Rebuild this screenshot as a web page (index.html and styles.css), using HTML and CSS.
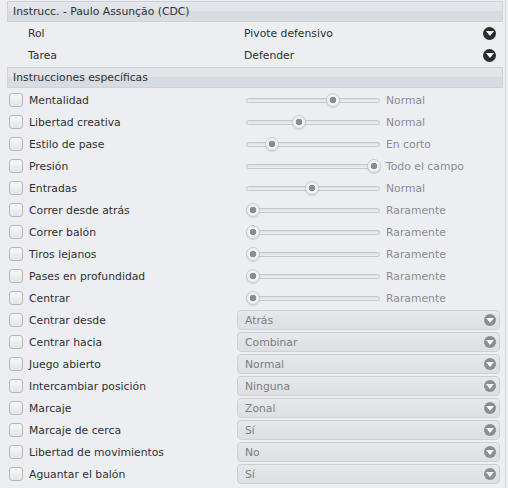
FILE: index.html
```html
<!DOCTYPE html>
<html>
<head>
<meta charset="utf-8">
<link rel="stylesheet" href="styles.css">
</head>
<body>
<div class="panel">
  <div class="header">Instrucc. - Paulo Assunção (CDC)</div>
  <div class="prow"><span class="plabel">Rol</span><span class="pvalue">Pivote defensivo</span><span class="darrow"></span></div>
  <div class="prow"><span class="plabel">Tarea</span><span class="pvalue">Defender</span><span class="darrow"></span></div>
  <div class="header second">Instrucciones específicas</div>

  <div class="row"><div class="left"><span class="cb"></span><span class="lbl">Mentalidad</span></div><div class="slider"><div class="track"><div class="range"><span class="thumb" style="left:66%"></span></div></div><span class="sval">Normal</span></div></div>
  <div class="row"><div class="left"><span class="cb"></span><span class="lbl">Libertad creativa</span></div><div class="slider"><div class="track"><div class="range"><span class="thumb" style="left:38%"></span></div></div><span class="sval">Normal</span></div></div>
  <div class="row"><div class="left"><span class="cb"></span><span class="lbl">Estilo de pase</span></div><div class="slider"><div class="track"><div class="range"><span class="thumb" style="left:16%"></span></div></div><span class="sval">En corto</span></div></div>
  <div class="row"><div class="left"><span class="cb"></span><span class="lbl">Presión</span></div><div class="slider"><div class="track"><div class="range"><span class="thumb" style="left:100%"></span></div></div><span class="sval">Todo el campo</span></div></div>
  <div class="row"><div class="left"><span class="cb"></span><span class="lbl">Entradas</span></div><div class="slider"><div class="track"><div class="range"><span class="thumb" style="left:49%"></span></div></div><span class="sval">Normal</span></div></div>
  <div class="row"><div class="left"><span class="cb"></span><span class="lbl">Correr desde atrás</span></div><div class="slider"><div class="track"><div class="range"><span class="thumb" style="left:0%"></span></div></div><span class="sval">Raramente</span></div></div>
  <div class="row"><div class="left"><span class="cb"></span><span class="lbl">Correr balón</span></div><div class="slider"><div class="track"><div class="range"><span class="thumb" style="left:0%"></span></div></div><span class="sval">Raramente</span></div></div>
  <div class="row"><div class="left"><span class="cb"></span><span class="lbl">Tiros lejanos</span></div><div class="slider"><div class="track"><div class="range"><span class="thumb" style="left:0%"></span></div></div><span class="sval">Raramente</span></div></div>
  <div class="row"><div class="left"><span class="cb"></span><span class="lbl">Pases en profundidad</span></div><div class="slider"><div class="track"><div class="range"><span class="thumb" style="left:0%"></span></div></div><span class="sval">Raramente</span></div></div>
  <div class="row"><div class="left"><span class="cb"></span><span class="lbl">Centrar</span></div><div class="slider"><div class="track"><div class="range"><span class="thumb" style="left:0%"></span></div></div><span class="sval">Raramente</span></div></div>

  <div class="row"><div class="left"><span class="cb"></span><span class="lbl">Centrar desde</span></div><div class="select"><span>Atrás</span><span class="garrow"></span></div></div>
  <div class="row"><div class="left"><span class="cb"></span><span class="lbl">Centrar hacia</span></div><div class="select"><span>Combinar</span><span class="garrow"></span></div></div>
  <div class="row"><div class="left"><span class="cb"></span><span class="lbl">Juego abierto</span></div><div class="select"><span>Normal</span><span class="garrow"></span></div></div>
  <div class="row"><div class="left"><span class="cb"></span><span class="lbl">Intercambiar posición</span></div><div class="select"><span>Ninguna</span><span class="garrow"></span></div></div>
  <div class="row"><div class="left"><span class="cb"></span><span class="lbl">Marcaje</span></div><div class="select"><span>Zonal</span><span class="garrow"></span></div></div>
  <div class="row"><div class="left"><span class="cb"></span><span class="lbl">Marcaje de cerca</span></div><div class="select"><span>Sí</span><span class="garrow"></span></div></div>
  <div class="row"><div class="left"><span class="cb"></span><span class="lbl">Libertad de movimientos</span></div><div class="select"><span>No</span><span class="garrow"></span></div></div>
  <div class="row"><div class="left"><span class="cb"></span><span class="lbl">Aguantar el balón</span></div><div class="select"><span>Sí</span><span class="garrow"></span></div></div>
</div>
</body>
</html>
```
FILE: styles.css
```css
html, body {
  margin: 0;
  padding: 0;
  background: #eceef1;
}
body {
  font-family: "DejaVu Sans", sans-serif;
  font-size: 10.8px;
  color: #2f3134;
  width: 508px;
  height: 488px;
  overflow: hidden;
}
.panel {
  width: 506px;
  height: 488px;
  border-right: 1px solid #d3d7dc;
  padding-top: 1px;
  box-sizing: border-box;
}
.header {
  margin-left: 7px;
  width: 496px;
  height: 21px;
  box-sizing: border-box;
  border: 1px solid #cdd2d9;
  background: linear-gradient(#e4e7ec 0%, #e0e4e9 45%, #d6dbe2 50%, #d8dce3 100%);
  padding-left: 5px;
  display: flex;
  align-items: center;
}
.header.second {
  margin-top: 1px;
}
.prow {
  height: 22px;
  display: flex;
  align-items: center;
}
.plabel {
  width: 216px;
  padding-left: 28px;
}
.pvalue {
  flex: 1;
}
.darrow, .garrow {
  width: 12px;
  height: 12px;
  border-radius: 50%;
  background: #2b2c2e;
  position: relative;
  flex: none;
}
.darrow {
  margin-right: 9px;
  width: 13px;
  height: 13px;
}
.darrow::after, .garrow::after {
  content: "";
  position: absolute;
  left: 50%;
  top: 50%;
  margin-left: -4px;
  margin-top: -2px;
  border-left: 4px solid transparent;
  border-right: 4px solid transparent;
  border-top: 5px solid #fff;
}
.header + .row {
  margin-top: 1px;
}
.row {
  height: 22px;
  display: grid;
  grid-template-columns: 237px 1fr;
  align-items: center;
}
.left {
  display: flex;
  align-items: center;
}
.cb {
  margin-left: 9px;
  width: 14px;
  height: 14px;
  box-sizing: border-box;
  border: 1px solid #b4b8be;
  border-radius: 3px;
  background: linear-gradient(#f6f7f8, #e3e5e8);
}
.lbl {
  margin-left: 6px;
}
.slider {
  display: flex;
  align-items: center;
}
.track {
  margin-left: 9px;
  width: 134px;
  height: 5px;
  box-sizing: border-box;
  border: 1px solid #c3c7cc;
  border-radius: 3px;
  background: linear-gradient(#dcdfe3, #eef0f2);
  position: relative;
}
.range {
  position: absolute;
  left: 6px;
  right: 5px;
  top: 50%;
  height: 0;
}
.thumb {
  position: absolute;
  top: 0;
  width: 14px;
  height: 14px;
  margin-top: -7px;
  margin-left: -7px;
  box-sizing: border-box;
  border-radius: 50%;
  border: 1px solid #c6cacf;
  background: radial-gradient(circle, #8a8c90 0, #8a8c90 3px, #f3f4f6 3.6px, #e6e8eb 100%);
  box-shadow: 0 1px 1px rgba(0,0,0,0.12);
}
.sval {
  margin-left: 6px;
  color: #8a8d91;
}
.select {
  width: 263px;
  height: 20px;
  box-sizing: border-box;
  border: 1px solid #ccd0d5;
  border-radius: 4px;
  background: linear-gradient(#e6e8eb, #dcdfe3);
  display: flex;
  align-items: center;
  justify-content: space-between;
  padding: 0 3px 0 7px;
  color: #7b7e82;
}
.garrow {
  background: #8b8d90;
}
```
